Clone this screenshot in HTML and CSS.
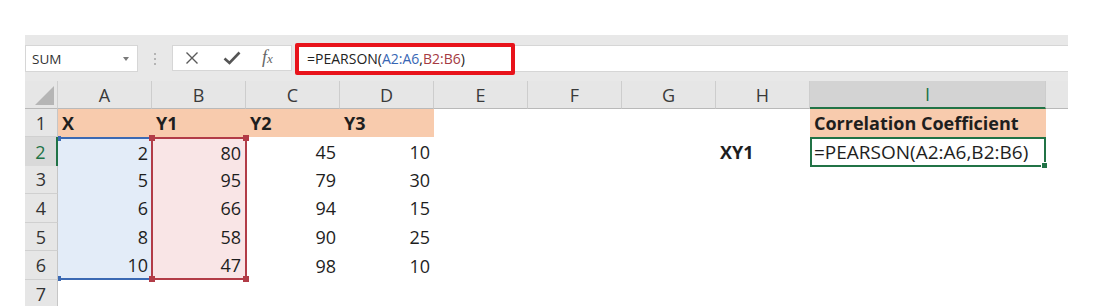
FILE: index.html
```html
<!DOCTYPE html>
<html>
<head>
<meta charset="utf-8">
<link rel="stylesheet" href="styles.css">
</head>
<body>
<div class="app">
  <div class="toolbar">
    <div class="namebox"><span class="name">SUM</span><span class="caret"></span></div>
    <div class="grip"><i></i><i></i><i></i></div>
    <div class="fnbox">
      <svg class="ico-x" width="14" height="14" viewBox="0 0 14 14"><path d="M1.5 1.5 L12.5 12.5 M12.5 1.5 L1.5 12.5" stroke="#5a5a5a" stroke-width="1.4" fill="none"/></svg>
      <svg class="ico-check" width="18" height="14" viewBox="0 0 18 14"><path d="M1.5 7.5 L6.5 12 L16.5 1.5" stroke="#555" stroke-width="2.6" fill="none"/></svg>
      <span class="fx">f<span class="fx-x">x</span></span>
    </div>
    <div class="formula">
      <div class="formula-text">=PEARSON(<span class="ref-a">A2:A6</span>,<span class="ref-b">B2:B6</span>)</div>
    </div>
  </div>

  <div class="sheet">
    <div class="row hdr">
      <div class="corner"><span class="tri"></span></div>
      <div class="ch">A</div><div class="ch">B</div><div class="ch">C</div><div class="ch">D</div>
      <div class="ch">E</div><div class="ch">F</div><div class="ch">G</div><div class="ch">H</div>
      <div class="ch ch-sel">I</div><div class="ch ch-end"></div>
    </div>

    <div class="row r1">
      <div class="rh">1</div>
      <div class="c peach b">X</div><div class="c peach b">Y1</div><div class="c peach b">Y2</div><div class="c peach b">Y3</div>
      <div class="c"></div><div class="c"></div><div class="c"></div><div class="c"></div>
      <div class="c peach b">Correlation Coefficient</div><div class="c"></div>
    </div>

    <div class="row">
      <div class="rh rh-sel">2</div>
      <div class="c n ra ra-top">2<span class="h tl"></span></div>
      <div class="c n rb rb-top">80<span class="h tl"></span><span class="h tr"></span></div>
      <div class="c n">45</div><div class="c n">10</div>
      <div class="c"></div><div class="c"></div><div class="c"></div><div class="c b">XY1</div>
      <div class="c sel">=PEARSON(A2:A6,B2:B6)<span class="h br"></span></div><div class="c"></div>
    </div>

    <div class="row">
      <div class="rh">3</div>
      <div class="c n ra">5</div><div class="c n rb">95</div><div class="c n">79</div><div class="c n">30</div>
      <div class="c"></div><div class="c"></div><div class="c"></div><div class="c"></div><div class="c"></div><div class="c"></div>
    </div>

    <div class="row">
      <div class="rh">4</div>
      <div class="c n ra">6</div><div class="c n rb">66</div><div class="c n">94</div><div class="c n">15</div>
      <div class="c"></div><div class="c"></div><div class="c"></div><div class="c"></div><div class="c"></div><div class="c"></div>
    </div>

    <div class="row">
      <div class="rh">5</div>
      <div class="c n ra">8</div><div class="c n rb">58</div><div class="c n">90</div><div class="c n">25</div>
      <div class="c"></div><div class="c"></div><div class="c"></div><div class="c"></div><div class="c"></div><div class="c"></div>
    </div>

    <div class="row">
      <div class="rh">6</div>
      <div class="c n ra ra-bot">10<span class="h bl"></span></div>
      <div class="c n rb rb-bot">47<span class="h bl"></span><span class="h br"></span></div>
      <div class="c n">98</div><div class="c n">10</div>
      <div class="c"></div><div class="c"></div><div class="c"></div><div class="c"></div><div class="c"></div><div class="c"></div>
    </div>

    <div class="row">
      <div class="rh">7</div>
      <div class="c"></div><div class="c"></div><div class="c"></div><div class="c"></div>
      <div class="c"></div><div class="c"></div><div class="c"></div><div class="c"></div><div class="c"></div><div class="c"></div>
    </div>
  </div>
</div>
</body>
</html>
```
FILE: styles.css
```css
html, body {
  margin: 0;
  padding: 0;
  background: #ffffff;
  overflow: hidden;
}
body {
  font-family: "Open Sans", "Lato", sans-serif;
  color: #1e1e1e;
}
.app {
  margin: 35px 0 0 25px;
  width: 1043px;
}

/* ---------- toolbar ---------- */
.toolbar {
  height: 46px;
  box-sizing: border-box;
  padding-top: 10px;
  background: #e8e8e8;
  display: flex;
  align-items: flex-start;
}
.namebox {
  width: 113px;
  height: 27px;
  box-sizing: border-box;
  background: #fff;
  border: 1px solid #d6d6d6;
  display: flex;
  align-items: center;
  padding: 0 8px 0 6px;
  font-size: 13.5px;
  color: #333;
}
.name { flex: 1; }
.caret {
  width: 0; height: 0;
  border-left: 3.5px solid transparent;
  border-right: 3.5px solid transparent;
  border-top: 4px solid #7a7a7a;
}
.grip {
  width: 34px;
  height: 27px;
  display: flex;
  flex-direction: column;
  align-items: center;
  justify-content: center;
  gap: 3px;
}
.grip i {
  display: block;
  width: 2px; height: 2px;
  background: #b4b4b4;
}
.fnbox {
  width: 120px;
  height: 26px;
  box-sizing: border-box;
  background: #fff;
  border: 1px solid #d6d6d6;
  display: flex;
  align-items: center;
  padding-left: 12px;
}
.ico-x { margin-right: 24px; }
.ico-check { margin-right: 21px; }
.fx {
  font-family: "Liberation Serif", "DejaVu Serif", serif;
  font-style: italic;
  font-size: 18px;
  color: #666;
  line-height: 1;
  margin-top: -2px;
}
.fx-x { font-size: 13px; }
.formula {
  flex: 1;
  margin-left: 4px;
  height: 27px;
  box-sizing: border-box;
  background: #fff;
  border-top: 1px solid #d6d6d6;
  border-bottom: 1px solid #d6d6d6;
}
.formula-text {
  width: 220px;
  height: 32px;
  margin-top: -3px;
  margin-left: -1px;
  box-sizing: border-box;
  border: 4px solid #e8131b;
  border-radius: 2px;
  padding-left: 8px;
  font-size: 14px;
  line-height: 24px;
  color: #222;
  background: #fff;
  white-space: nowrap;
}
.ref-a { color: #3766b4; }
.ref-b { color: #a53a42; }

/* ---------- sheet ---------- */
.sheet {
  display: flex;
  flex-direction: column;
  font-size: 18px;
}
.row {
  display: grid;
  grid-template-columns: 33px repeat(8, 94px) 236px 22px;
  height: 28.6px;
}
.row.hdr, .row.r1 { height: 28px; }
.corner {
  background: #e6e6e6;
  border-right: 1px solid #cfcfcf;
  border-bottom: 1px solid #b9b9b9;
  box-sizing: border-box;
  display: flex;
  align-items: flex-end;
  justify-content: flex-end;
  padding: 0 3px 3px 0;
}
.tri {
  width: 0; height: 0;
  border-left: 19px solid transparent;
  border-bottom: 19px solid #b5b5b5;
}
.ch {
  background: #e6e6e6;
  border-right: 1px solid #cdcdcd;
  border-bottom: 1px solid #b9b9b9;
  box-sizing: border-box;
  display: flex;
  align-items: center;
  justify-content: center;
  color: #3a3a3a;
}
.ch-sel {
  background: #d3d3d3;
  border-bottom: 2px solid #217346;
  color: #217346;
}
.ch-end { border-right: none; }
.rh {
  background: #e6e6e6;
  border-bottom: 1px solid #d0d0d0;
  border-right: 1px solid #c6c6c6;
  box-sizing: border-box;
  display: flex;
  align-items: center;
  justify-content: center;
  color: #333;
}
.rh-sel {
  background: #d9d9d9;
  color: #217346;
  border-right: 2px solid #217346;
}
.c {
  display: flex;
  align-items: center;
  padding: 0 4px;
  white-space: nowrap;
  position: relative;
  box-sizing: border-box;
}
.n { justify-content: flex-end; }
.b { font-weight: 700; }
.peach { background: #f8cbad; }
.sel {
  border: 2px solid #217346;
  padding-left: 2px;
  font-size: 19px;
  z-index: 2;
}

/* range highlights */
.ra { background: #e3ecf8; }
.ra-top { border-top: 2px solid #3b69b3; }
.ra-bot { border-bottom: 2px solid #3b69b3; }
.rb {
  background: #f9e5e6;
  border-left: 2px solid #b23c47;
  border-right: 2px solid #b23c47;
  margin-left: -1px;
  margin-right: -1px;
  z-index: 1;
}
.rb-top { border-top: 2px solid #b23c47; }
.rb-bot { border-bottom: 2px solid #b23c47; }
.h {
  position: absolute;
  width: 6px;
  height: 6px;
}
.ra .h { background: #3b69b3; width: 3px; height: 5px; }
.ra .tl { left: 0; top: -3px; }
.ra .bl { left: 0; bottom: -3px; }
.rb .h { background: #b23c47; }
.rb .tl { left: -4px; top: -4px; }
.rb .tr { right: -4px; top: -4px; }
.rb .bl { left: -4px; bottom: -4px; }
.rb .br { right: -4px; bottom: -4px; }
.sel .br {
  background: #217346;
  width: 5px; height: 5px;
  right: -4px; bottom: -4px;
  border: 1px solid #fff;
}
```
